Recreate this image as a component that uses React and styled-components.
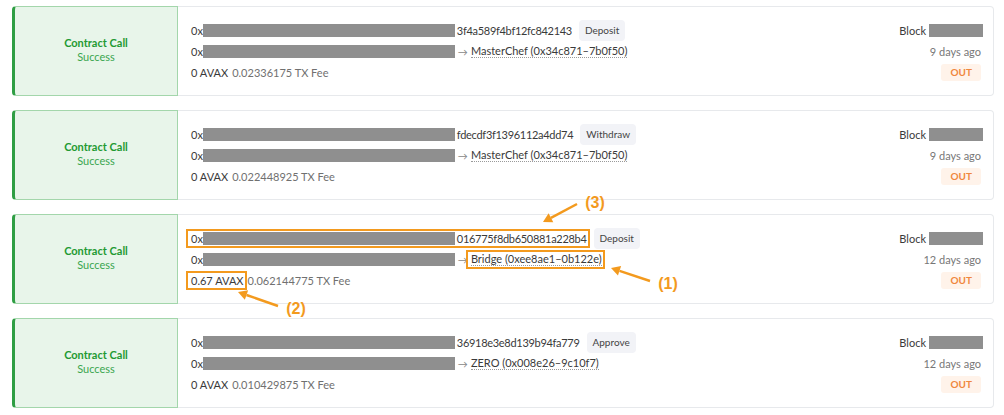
import React from "react";
import styled, { createGlobalStyle } from "styled-components";

const Global = createGlobalStyle`
  body {
    margin: 0;
    background: #fff;
    font-family: Lato, "Open Sans", sans-serif;
  }
`;

const ORANGE = "#f39a1e";

const Page = styled.div`
  position: relative;
  display: flex;
  flex-direction: column;
  gap: 14px;
  padding: 6px 10px 8px 12px;
`;

const Card = styled.div`
  display: flex;
  height: 90px;
`;

const Status = styled.div`
  width: 162px;
  flex-shrink: 0;
  display: flex;
  flex-direction: column;
  align-items: center;
  justify-content: center;
  background: #e8f5ea;
  border: 1px solid #a3d6ab;
  border-left: 3px solid #2f9e44;
  border-radius: 4px 0 0 4px;
  font-size: 11px;
  line-height: 14px;
  padding-bottom: 2px;
`;

const StatusTitle = styled.div`
  color: #1f9a33;
  font-weight: 700;
`;

const StatusText = styled.div`
  color: #3aa64f;
`;

const Body = styled.div`
  flex: 1;
  display: flex;
  justify-content: space-between;
  padding: 13px 8px 0 13px;
  border: 1px solid #e7e9ec;
  border-left: none;
  border-radius: 0 4px 4px 0;
`;

const Column = styled.div`
  display: flex;
  flex-direction: column;
  align-items: ${(p) => (p.$right ? "flex-end" : "flex-start")};
`;

const Row = styled.div`
  height: 21px;
  display: flex;
  align-items: center;
  font-size: 11px;
  color: ${(p) => p.$color || "#3a3a3a"};
  white-space: nowrap;
  margin-right: ${(p) => p.$inset || 0}px;
`;

const Mask = styled.span`
  display: inline-block;
  width: ${(p) => p.$w}px;
  height: 13px;
  background: #8f8f8f;
  margin-right: 2px;
  margin-left: ${(p) => p.$ml || 0}px;
`;

const Hash = styled.span`
  letter-spacing: -0.3px;
`;

const Highlight = styled.span`
  position: relative;
  display: inline-flex;
  align-items: center;
  height: 15px;
  &::after {
    content: "";
    position: absolute;
    top: -2px;
    bottom: -2px;
    left: -5px;
    right: -3px;
    border: 2px solid ${ORANGE};
    pointer-events: none;
  }
`;

const Method = styled.span`
  display: inline-block;
  height: 21px;
  line-height: 21px;
  padding: 0 6px;
  margin-left: 7px;
  background: #f2f3f7;
  border-radius: 4px;
  font-size: 10px;
  color: #444;
`;

const Arrow = styled.span`
  color: #888;
  font-size: 10px;
  margin: 0 3px 0 1px;
`;

const Contract = styled.span`
  border-bottom: 1px dotted #9a9a9a;
  line-height: 12px;
`;

const Fee = styled.span`
  color: #707070;
  margin-left: 4px;
`;

const Direction = styled.span`
  display: inline-block;
  height: 17px;
  line-height: 17px;
  padding: 0 9px;
  background: #fff3ea;
  color: #f0873d;
  font-size: 10px;
  font-weight: 700;
  border-radius: 3px;
`;

const Overlay = styled.svg`
  position: absolute;
  left: 0;
  top: 0;
  pointer-events: none;
  overflow: visible;
`;

const Label = styled.text`
  font-family: "Liberation Sans", Arial, sans-serif;
  font-size: 16px;
  font-weight: 700;
  fill: ${ORANGE};
`;

const txs = [
  { hash: "3f4a589f4bf12fc842143", method: "Deposit", to: "MasterChef (0x34c871\u20137b0f50)", value: "0", fee: "0.02336175", age: "9 days ago" },
  { hash: "fdecdf3f1396112a4dd74", method: "Withdraw", to: "MasterChef (0x34c871\u20137b0f50)", value: "0", fee: "0.022448925", age: "9 days ago" },
  { hash: "016775f8db650881a228b4", method: "Deposit", to: "Bridge (0xee8ae1\u20130b122e)", value: "0.67", fee: "0.062144775", age: "12 days ago", marked: true },
  { hash: "36918e3e8d139b94fa779", method: "Approve", to: "ZERO (0x008e26\u20139c10f7)", value: "0", fee: "0.010429875", age: "12 days ago" },
];

const Mark = ({ on, children }) => (on ? <Highlight>{children}</Highlight> : <>{children}</>);

const Callout = ({ label, x, y, from, to }) => {
  const [x1, y1] = from;
  const [x2, y2] = to;
  const a = Math.atan2(y2 - y1, x2 - x1);
  const len = 9;
  const w = 5;
  const bx = x2 - len * Math.cos(a);
  const by = y2 - len * Math.sin(a);
  const px = -Math.sin(a) * w;
  const py = Math.cos(a) * w;
  return (
    <g>
      <line x1={x1} y1={y1} x2={bx} y2={by} stroke={ORANGE} strokeWidth="2.5" />
      <polygon points={`${x2},${y2} ${bx + px},${by + py} ${bx - px},${by - py}`} fill={ORANGE} />
      <Label x={x} y={y} textAnchor="middle">{label}</Label>
    </g>
  );
};

const Tx = ({ tx }) => (
  <Card>
    <Status>
      <StatusTitle>Contract Call</StatusTitle>
      <StatusText>Success</StatusText>
    </Status>
    <Body>
      <Column>
        <Row>
          <Mark on={tx.marked}>
            0x<Mask $w={252} />
            <Hash>{tx.hash}</Hash>
          </Mark>
          <Method>{tx.method}</Method>
        </Row>
        <Row>
          0x<Mask $w={252} />
          <Arrow>→</Arrow>
          <Mark on={tx.marked}>
            <Contract>{tx.to}</Contract>
          </Mark>
        </Row>
        <Row>
          <Mark on={tx.marked}>{tx.value} AVAX</Mark>
          <Fee>{tx.fee} TX Fee</Fee>
        </Row>
      </Column>
      <Column $right>
        <Row>
          Block<Mask $w={54} $ml={3} />
        </Row>
        <Row $color="#777" $inset={4}>{tx.age}</Row>
        <Row $inset={4}>
          <Direction>OUT</Direction>
        </Row>
      </Column>
    </Body>
  </Card>
);

export default function App() {
  return (
    <>
      <Global />
      <Page>
        {txs.map((tx) => (
          <Tx key={tx.hash} tx={tx} />
        ))}
        <Overlay width="1004" height="415">
          <Callout label="(3)" x={595} y={208} from={[577, 204]} to={[543, 222]} />
          <Callout label="(1)" x={668} y={289} from={[650, 281]} to={[611, 268]} />
          <Callout label="(2)" x={296} y={314} from={[278, 306]} to={[238, 292]} />
        </Overlay>
      </Page>
    </>
  );
}
